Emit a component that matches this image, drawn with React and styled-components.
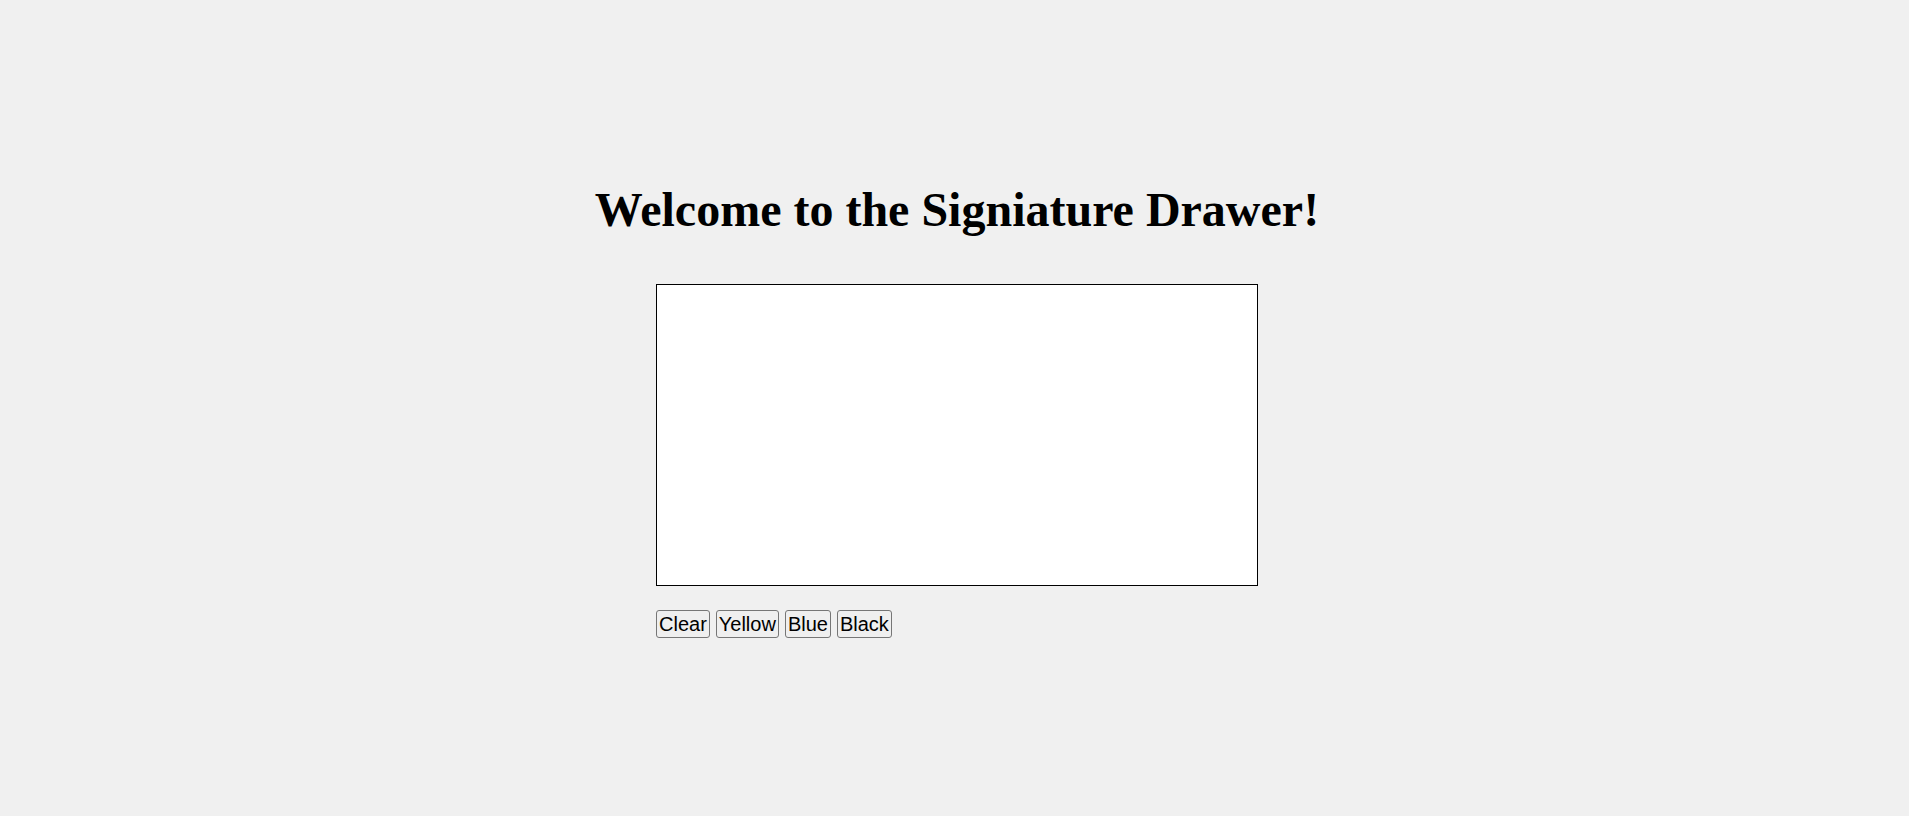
import React, { useRef, useState } from "react";
import styled, { createGlobalStyle } from "styled-components";

const GlobalStyle = createGlobalStyle`
  html, body {
    margin: 0;
    padding: 0;
    background: #f0f0f0;
  }
`;

const Page = styled.main`
  display: flex;
  flex-direction: column;
  align-items: center;
  padding: 182px 0 0 5px;
  min-height: 100vh;
  box-sizing: border-box;
  font-family: "Liberation Serif", "Times New Roman", serif;
`;

const Title = styled.h1`
  margin: 0 0 47px;
  font-size: 48px;
  font-weight: bold;
  line-height: normal;
  color: #000;
`;

const Board = styled.div`
  display: flex;
  flex-direction: column;
  align-items: flex-start;
`;

const Pad = styled.canvas`
  display: block;
  width: 600px;
  height: 300px;
  background: #fff;
  border: 1px solid #000;
  cursor: crosshair;
`;

const Toolbar = styled.div`
  display: flex;
  gap: 6px;
  margin-top: 24px;
`;

const Button = styled.button`
  font-family: "Liberation Sans", Arial, sans-serif;
  font-size: 20px;
  line-height: 24px;
  padding: 1px 2px;
  color: #000;
  background: #efefef;
  border: 1px solid #767676;
  border-radius: 3px;
  cursor: pointer;
`;

export default function App() {
  //state
  const canvasRef = useRef(null);
  const drawing = useRef(false);
  const [color, setColor] = useState("black");

  //handlers
  const point = (e) => {
    const rect = canvasRef.current.getBoundingClientRect();
    return [e.clientX - rect.left, e.clientY - rect.top];
  };

  const start = (e) => {
    const ctx = canvasRef.current.getContext("2d");
    const [x, y] = point(e);
    ctx.strokeStyle = color;
    ctx.lineWidth = 2;
    ctx.lineCap = "round";
    ctx.beginPath();
    ctx.moveTo(x, y);
    drawing.current = true;
  };

  const move = (e) => {
    if (!drawing.current) return;
    const ctx = canvasRef.current.getContext("2d");
    const [x, y] = point(e);
    ctx.lineTo(x, y);
    ctx.stroke();
  };

  const stop = () => {
    drawing.current = false;
  };

  const clear = () => {
    const c = canvasRef.current;
    c.getContext("2d").clearRect(0, 0, c.width, c.height);
  };

  return (
    <Page>
      <GlobalStyle />
      <Title>Welcome to the Signiature Drawer!</Title>
      <Board>
        <Pad
          ref={canvasRef}
          width={600}
          height={300}
          onMouseDown={start}
          onMouseMove={move}
          onMouseUp={stop}
          onMouseLeave={stop}
        />
        <Toolbar>
          <Button onClick={clear}>Clear</Button>
          <Button onClick={() => setColor("yellow")}>Yellow</Button>
          <Button onClick={() => setColor("blue")}>Blue</Button>
          <Button onClick={() => setColor("black")}>Black</Button>
        </Toolbar>
      </Board>
    </Page>
  );
}
